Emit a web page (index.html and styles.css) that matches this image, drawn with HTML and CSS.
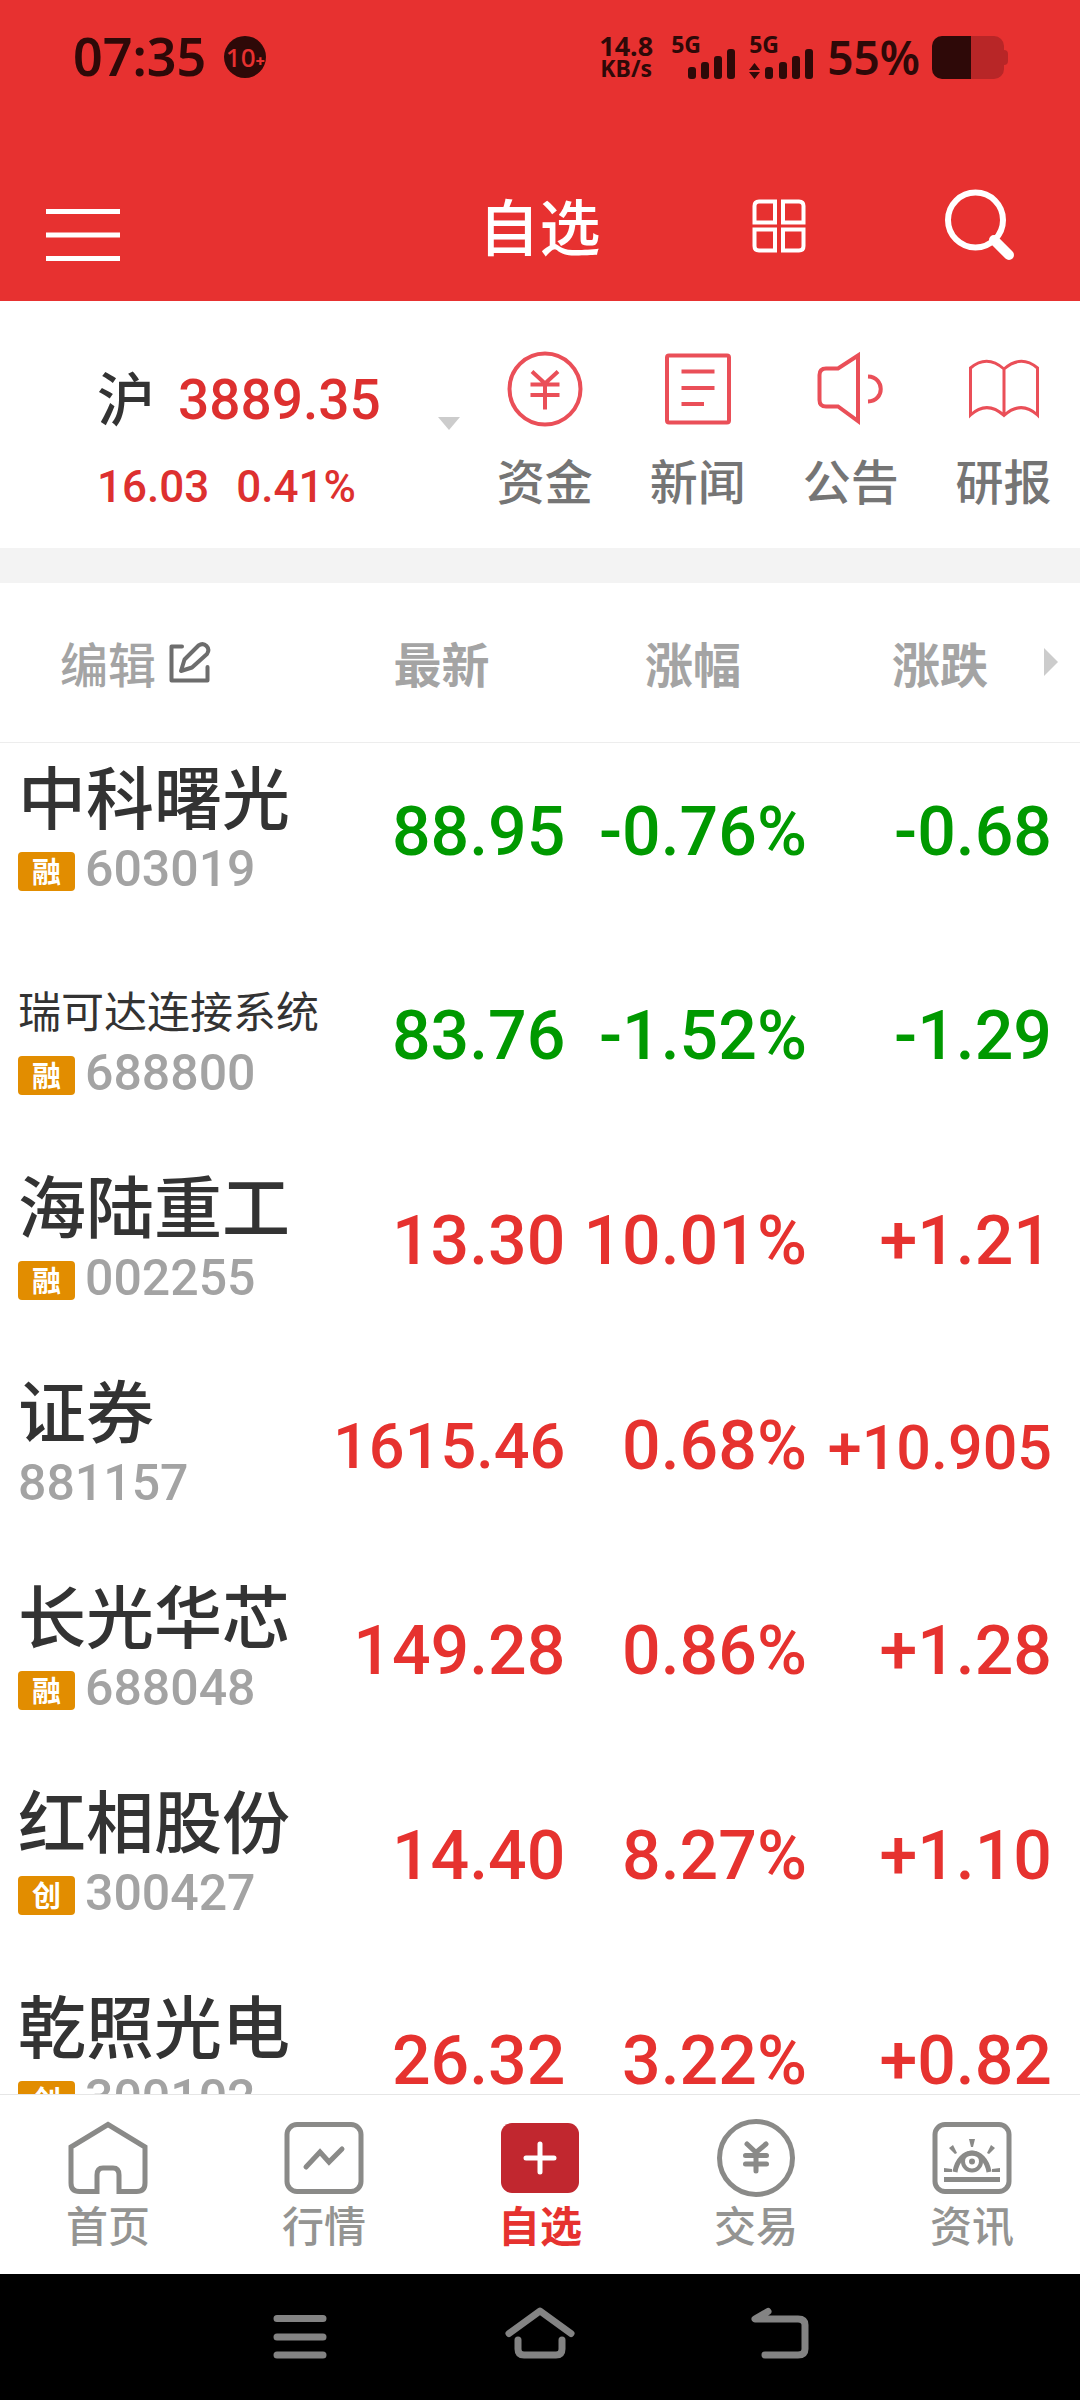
FILE: index.html
```html
<!DOCTYPE html>
<html lang="zh-CN">
<head>
<meta charset="utf-8">
<meta name="viewport" content="width=device-width, initial-scale=1">
<title>自选</title>
<link rel="stylesheet" href="styles.css">
</head>
<body>
<div class="app">
  <div class="status">
    <span class="clock">07:35</span>
    <span class="notice">10<small>+</small></span>
    <span class="spacer"></span>
    <span class="speed"><span class="speed-num">14.8</span><span class="speed-unit">KB/s</span></span>
    <span class="signal">
      <span class="net">5G</span>
      <svg width="64" height="30" viewBox="0 0 64 30"><g fill="#2e0908"><rect x="17" y="18" width="8" height="12" rx="3"/><rect x="30" y="13" width="8" height="17" rx="3"/><rect x="43" y="7" width="8" height="23" rx="3"/><rect x="56" y="0" width="8" height="30" rx="3"/></g></svg>
    </span>
    <span class="signal">
      <span class="net">5G</span>
      <svg width="64" height="30" viewBox="0 0 64 30"><g fill="#2e0908"><path d="M0 21 5.500 14 11 21ZM0 23H11L5.500 30Z"/><rect x="16" y="18" width="8" height="12" rx="3"/><rect x="30" y="13" width="8" height="17" rx="3"/><rect x="43" y="7" width="8" height="23" rx="3"/><rect x="56" y="0" width="8" height="30" rx="3"/></g></svg>
    </span>
    <span class="percent">55%</span>
    <svg class="battery" width="76" height="43" viewBox="0 0 76 43"><path d="M39 0H62a10 10 0 0 1 10 10V14q4 0 4 4v7q0 4-4 4v4a10 10 0 0 1-10 10H39Z" fill="#b82627"/><path d="M39 0V43H10A10 10 0 0 1 0 33V10A10 10 0 0 1 10 0Z" fill="#2e0908"/></svg>
  </div>

  <header class="titlebar">
    <button class="icon-btn menu" aria-label="菜单"><svg width="74" height="54" viewBox="0 0 74 54"><path d="M0 3.500H74M0 27H74M0 50.500H74" stroke="#fff" stroke-width="5"/></svg></button>
    <h1 class="title">自选</h1>
    <div class="actions">
      <button class="icon-btn" aria-label="布局"><svg width="54" height="54" viewBox="0 0 54 54"><g fill="none" stroke="#fff" stroke-width="4"><path d="M7 2.500H23V23.500H2.500V7Q2.500 2.500 7 2.500ZM31 2.500H47Q51.500 2.500 51.500 7V23.500H31ZM2.500 30.500H23V51.500H7Q2.500 51.500 2.500 47ZM31 30.500H51.500V47Q51.500 51.500 47 51.500H31Z"/></g></svg></button>
      <button class="icon-btn" aria-label="搜索"><svg width="70" height="74" viewBox="0 0 70 74"><circle cx="30.500" cy="31" r="27.500" fill="none" stroke="#fff" stroke-width="6"/><path d="M49 51 64 66" stroke="#fff" stroke-width="10" stroke-linecap="round"/></svg></button>
    </div>
  </header>

  <section class="overview">
    <div class="index">
      <div class="index-top"><span class="index-name">沪</span><span class="index-value">3889.35</span></div>
      <div class="index-sub"><span>16.03</span><span>0.41%</span></div>
    </div>
    <button class="icon-btn index-more" aria-label="切换指数"><svg width="22" height="13" viewBox="0 0 22 13"><path d="M0 0H22L11 13Z" fill="#ccc"/></svg></button>
    <nav class="shortcuts">
      <a class="shortcut" href="#"><svg width="76" height="76" viewBox="0 0 76 76"><g fill="none" stroke="#ea4f58" stroke-width="4"><circle cx="38" cy="38" r="35.500"/><path d="M25 20.500 38 32.500 51 20.500M38 32V58.500M23.500 33.500H52.500M23.500 44H52.500"/></g></svg>资金</a>
      <a class="shortcut" href="#"><svg width="76" height="76" viewBox="0 0 76 76"><g fill="none" stroke="#ea4f58" stroke-width="4"><rect x="7" y="4.500" width="62" height="67" rx="2"/><path d="M21.500 20.500H54.500M21.500 37H54.500M21.500 53H44"/></g></svg>新闻</a>
      <a class="shortcut" href="#"><svg width="76" height="76" viewBox="0 0 76 76"><g fill="none" stroke="#ea4f58" stroke-width="4"><path d="M45 4.500V70L25 55.500H13Q6.500 55.500 6.500 49V24Q6.500 17.500 13 17.500H25Z"/><path d="M55 25.500C72 26 72 50 55 50.500"/></g></svg>公告</a>
      <a class="shortcut" href="#"><svg width="76" height="76" viewBox="0 0 76 76"><g fill="none" stroke="#ea4f58" stroke-width="3"><path d="M38 18Q21 3 4.500 17V64Q21 49 38 64.500Q55 49 71.500 64V17Q55 3 38 18V64"/></g></svg>研报</a>
    </nav>
  </section>

  <main class="list">
    <table class="quotes">
      <colgroup><col class="c-name"><col class="c-price"><col class="c-pct"><col></colgroup>
      <thead>
        <tr>
          <th scope="col"><button class="edit">编辑<svg width="42" height="42" viewBox="0 0 42 42"><g fill="none" stroke="#6d6d6d" stroke-width="4" stroke-linecap="round" stroke-linejoin="round"><path d="M13 5.500H2.500V39.500H38.500V26"/><path d="M12 30 15.500 18.500 29.500 4.500Q34 1.500 37.500 5T38 13L23 26.500Z"/></g></svg></button></th>
          <th scope="col" class="h-price">最新</th>
          <th scope="col" class="h-pct">涨幅</th>
          <th scope="col" class="h-chg"><span>涨跌<svg width="14" height="28" viewBox="0 0 14 28"><path d="M0 0 14 14 0 28Z" fill="#ccc"/></svg></span></th>
        </tr>
      </thead>
      <tbody>
        <tr class="down"><td><div class="name">中科曙光</div><div class="code"><span class="tag">融</span>603019</div></td><td class="num">88.95</td><td class="num">-0.76%</td><td class="num">-0.68</td></tr>
        <tr class="down"><td><div class="name long">瑞可达连接系统</div><div class="code"><span class="tag">融</span>688800</div></td><td class="num">83.76</td><td class="num">-1.52%</td><td class="num">-1.29</td></tr>
        <tr class="up"><td><div class="name">海陆重工</div><div class="code"><span class="tag">融</span>002255</div></td><td class="num">13.30</td><td class="num">10.01%</td><td class="num">+1.21</td></tr>
        <tr class="up"><td><div class="name">证券</div><div class="code">881157</div></td><td class="num mid">1615.46</td><td class="num">0.68%</td><td class="num small">+10.905</td></tr>
        <tr class="up"><td><div class="name">长光华芯</div><div class="code"><span class="tag">融</span>688048</div></td><td class="num">149.28</td><td class="num">0.86%</td><td class="num">+1.28</td></tr>
        <tr class="up"><td><div class="name">红相股份</div><div class="code"><span class="tag">创</span>300427</div></td><td class="num">14.40</td><td class="num">8.27%</td><td class="num">+1.10</td></tr>
        <tr class="up"><td><div class="name">乾照光电</div><div class="code"><span class="tag">创</span>300102</div></td><td class="num">26.32</td><td class="num">3.22%</td><td class="num">+0.82</td></tr>
      </tbody>
    </table>
  </main>

  <nav class="tabs">
    <a class="tab" href="#"><svg width="80" height="80" viewBox="0 0 80 80"><path d="M40 6.500 77 29V65Q77 73.500 68.500 73.500H51V57Q51 50 45 50H35Q29 50 29 57V73.500H11.500Q3 73.500 3 65V29Z" fill="none" stroke="#8a8a88" stroke-width="5"/></svg>首页</a>
    <a class="tab" href="#"><svg width="80" height="80" viewBox="0 0 80 80"><g fill="none" stroke="#8a8a88" stroke-width="5"><rect x="3" y="6.500" width="74" height="67" rx="10"/><path d="M22 49 36 34 45 44 58 31" stroke-linecap="round"/></g></svg>行情</a>
    <a class="tab active" href="#"><svg width="80" height="80" viewBox="0 0 80 80"><rect x="1" y="5" width="78" height="70" rx="11" fill="#c1272f"/><path d="M26 40H54M40 26V54" stroke="#fff" stroke-width="5" stroke-linecap="round"/></svg>自选</a>
    <a class="tab" href="#"><svg width="80" height="80" viewBox="0 0 80 80"><g fill="none" stroke="#8a8a88" stroke-width="5"><circle cx="40" cy="40" r="36.500"/><path d="M31 26 40 34.500 50 26M40 35V53M29.500 37.500H50.500M29.500 46H50.500" stroke-linecap="round"/></g></svg>交易</a>
    <a class="tab" href="#"><svg width="80" height="80" viewBox="0 0 80 80"><g fill="none" stroke="#8a8a88"><rect x="3" y="6.500" width="74" height="67" rx="10" stroke-width="5"/><path d="M12 61.500H68" stroke-width="5"/><path d="M23 54C27 29 53 29 57 54" stroke-width="5"/><circle cx="40" cy="43.500" r="9" stroke-width="4"/></g><g fill="#8a8a88"><circle cx="40" cy="43.500" r="3"/><path d="M37 21H43L41 29H39ZM17 30 21 27 25 35 23 36ZM63 30 59 27 55 35 57 36ZM12 50 20 51V54L12 54ZM68 50 60 51V54L68 54Z"/></g></svg>资讯</a>
  </nav>

  <div class="sysnav">
    <button class="icon-btn" aria-label="最近任务"><svg width="72" height="56" viewBox="0 0 72 56"><path d="M13 13.500H59M13 32H59M13 50H59" stroke="#838383" stroke-width="7" stroke-linecap="round"/></svg></button>
    <button class="icon-btn" aria-label="主屏幕"><svg width="72" height="56" viewBox="0 0 72 56"><g fill="none" stroke="#838383" stroke-width="7" stroke-linecap="round" stroke-linejoin="round"><path d="M5 28.500 36 6 67 28.500"/><path d="M14 35V44Q14 50 20 50H52Q58 50 58 44V35"/></g></svg></button>
    <button class="icon-btn" aria-label="返回"><svg width="72" height="56" viewBox="0 0 72 56"><path d="M24 6.500 11 14H54Q61 14 61 20V44Q61 50 54 50H21" fill="none" stroke="#838383" stroke-width="7" stroke-linecap="round" stroke-linejoin="round"/></svg></button>
  </div>
</div>
</body>
</html>
```
FILE: styles.css
```css
* { box-sizing: border-box; }

body {
  margin: 0;
  background: #fff;
  color: #333;
  font-family: "Noto Sans CJK SC", sans-serif;
  font-weight: 500;
}

a { color: inherit; text-decoration: none; }
svg { display: block; flex: none; }

.app {
  display: flex;
  flex-direction: column;
  height: 100vh;
}

.icon-btn {
  display: block;
  padding: 0;
  border: 0;
  background: none;
}

/* Phone status bar */
.status {
  display: flex;
  flex: none;
  align-items: center;
  height: 114px;
  padding: 0 72px 0 73px;
  background: #e73130;
  color: #2e0908;
  font-family: "Noto Sans", sans-serif;
  font-weight: 700;
  white-space: nowrap;
}
.clock { font-size: 52px; line-height: 72px; font-weight: 600; padding-bottom: 2px; }
.notice {
  display: flex;
  align-items: center;
  justify-content: center;
  width: 42px;
  height: 42px;
  margin-left: 18px;
  border-radius: 50%;
  background: #2e0908;
  color: #e73130;
  font-size: 26px;
  font-weight: 500;
}
.notice small { padding-top: 8px; font-size: 16px; font-weight: 900; }
.spacer { flex: 1; }
.speed {
  display: flex;
  flex-direction: column;
  align-items: center;
  margin-right: 18px;
}
.speed-num { font-size: 27px; line-height: 22px; }
.speed-unit { font-size: 23px; line-height: 22px; }
.signal {
  display: flex;
  flex-direction: column;
  height: 44px;
  margin-right: 14px;
}
.net { font-size: 23px; line-height: 14px; padding-top: 2px; }
.signal svg { margin-top: -2px; }
.percent { font-size: 46px; font-weight: 600; margin-right: 12px; }

/* Title bar */
.titlebar {
  display: grid;
  grid-template-columns: 1fr auto 1fr;
  align-items: center;
  flex: none;
  height: 187px;
  padding: 38px 65px 0 46px;
  background: #e73130;
  color: #fff;
}
.title { margin: 0 0 4px; font-size: 61px; font-weight: 500; line-height: 72px; padding-left: 18px; }
.actions { display: flex; justify-content: flex-end; align-items: center; gap: 139px; }
.menu svg { margin-top: 16px; }
.actions svg { margin-top: -2px; }

/* Index summary and shortcuts */
.overview {
  display: flex;
  flex: none;
  height: 282px;
  border-bottom: 35px solid #f3f3f3;
}
.index { flex: 1; padding: 58px 0 0 97px; }
.index-top { display: flex; align-items: flex-start; gap: 23px; height: 80px; }
.index-name { font-size: 58px; line-height: 74px; }
.index-value {
  color: #dd302f;
  font: 500 55px/82px Roboto, sans-serif;
}
.index-sub {
  display: flex;
  gap: 27px;
  padding-top: 22px;
  color: #dd302f;
  font: 500 44px/52px Roboto, sans-serif;
}
.index-more { align-self: flex-start; margin-top: 116px; }
.shortcuts { display: flex; width: 57%; margin-left: 4px; padding-left: 4px; }
.shortcut {
  display: flex;
  flex: 1;
  flex-direction: column;
  align-items: center;
  gap: 22px;
  padding-top: 50px;
  color: #757575;
  font-size: 48px;
  line-height: 60px;
}

/* Watchlist */
.list {
  flex: 1;
  min-height: 0;
  overflow-y: auto;
  scrollbar-width: none;
}
.quotes {
  width: 100%;
  table-layout: fixed;
  border-collapse: collapse;
  white-space: nowrap;
}
.c-name { width: 30%; }
.c-price { width: 23%; }
.c-pct { width: 22%; }
.quotes th {
  height: 159px;
  padding: 0;
  border-bottom: 1px solid #ededed;
  color: #a4a4a4;
  font-size: 48px;
  font-weight: 700;
  line-height: 60px;
  text-align: right;
}
.quotes .h-price { padding-right: 83px; }
.quotes .h-pct { padding-right: 69px; }
.quotes .h-chg { padding-right: 22px; }
.h-chg span { display: flex; align-items: center; justify-content: flex-end; gap: 56px; }
.edit {
  display: flex;
  align-items: center;
  gap: 13px;
  padding: 0 0 0 60px;
  border: 0;
  background: none;
  color: inherit;
  font: inherit;
  font-weight: 500;
}
.quotes td {
  height: 205px;
  padding: 10px 0 0 18px;
  vertical-align: top;
}
.name { font-size: 68px; line-height: 84px; }
.long { padding-top: 20px; font-size: 43px; font-weight: 400; line-height: 64px; }
.code {
  display: flex;
  align-items: center;
  gap: 10px;
  color: #a3a3a3;
  font: 500 50px/64px Roboto, sans-serif;
}
.tag {
  width: 57px;
  height: 39px;
  margin-top: 5px;
  border-radius: 4px;
  background: #e28d00;
  color: #fff;
  font: 700 29px/37px "Noto Sans CJK SC", sans-serif;
  text-align: center;
}
.quotes .num {
  padding: 53px 7px 0 0;
  font: 500 68px/72px Roboto, sans-serif;
  text-align: right;
}
.quotes .num:nth-child(3) { padding-right: 3px; }
.quotes .num:last-child { padding-right: 28px; }
.quotes .mid { font-size: 63px; line-height: 74px; }
.quotes .small { font-size: 61px; line-height: 76px; }
.up .num { color: #e6322f; }
.down .num { color: #090; }

/* Bottom tabs */
.tabs {
  display: flex;
  flex: none;
  height: 180px;
  border-top: 1px solid #e6e6e6;
  background: #fff;
}
.tab {
  display: flex;
  flex: 1;
  flex-direction: column;
  align-items: center;
  padding-top: 23px;
  color: #949492;
  font-size: 42px;
  line-height: 52px;
}
.active { color: #e6322f; font-weight: 700; }

/* System navigation */
.sysnav {
  display: flex;
  flex: none;
  align-items: flex-start;
  justify-content: center;
  gap: 168px;
  height: 126px;
  padding-top: 31px;
  background: #000;
}
```
